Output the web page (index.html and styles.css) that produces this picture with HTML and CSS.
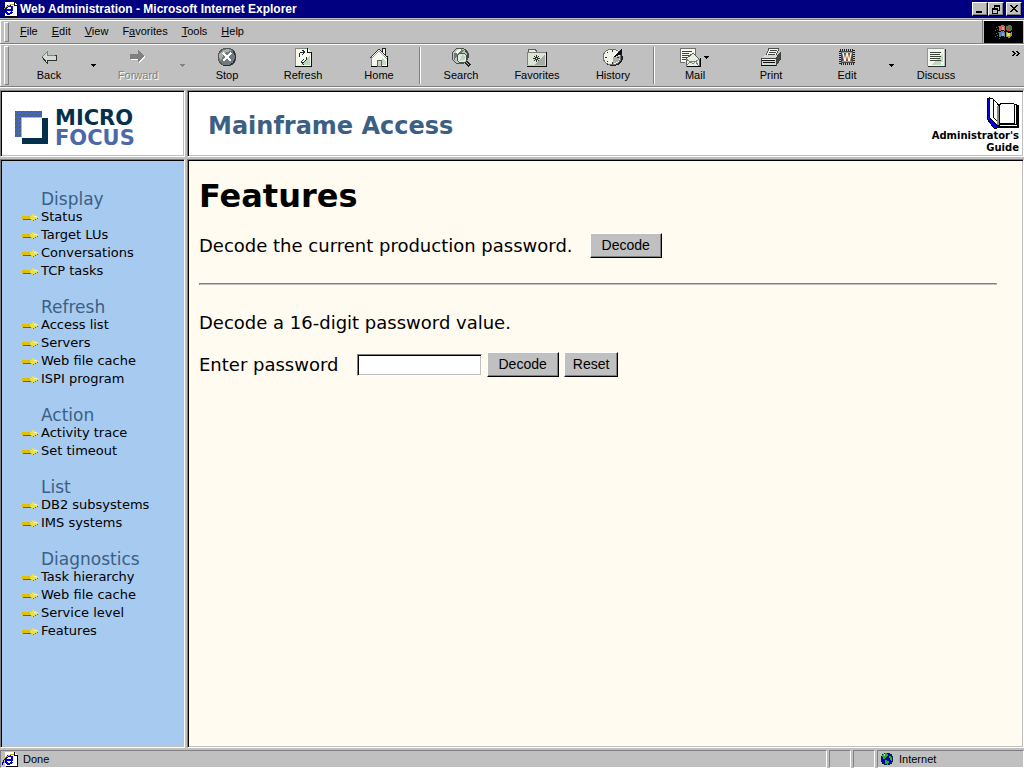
FILE: index.html
```
<!DOCTYPE html>
<html lang="en">
<head>
  <meta charset="UTF-8">
  <title>Web Administration - Microsoft Internet Explorer</title>
  <link rel="stylesheet" href="styles.css">
</head>
<body>

  <!-- Shared icons -->
  <svg class="defs" width="0" height="0" aria-hidden="true">
    <symbol id="ie" viewBox="0 0 16 16">
      <path d="M3 1h9l3 3v11H3z" fill="#fff"/>
      <path d="M12 1v3h3M15 4v11H4" fill="none" stroke="#000"/>
      <path d="M10 11Q6 15 4 11Q2 6 7 5Q11 5 10 9H4" fill="none" stroke="#0000d0" stroke-width="2"/>
      <path d="M1 13Q0 9 6 5Q11 2 12 4" fill="none" stroke="#c8b400"/>
      <path d="M1 14Q0 10 5 6" fill="none" stroke="#0000a0"/>
    </symbol>
    <symbol id="arrow" viewBox="0 0 18 8">
      <path d="M1 6h8v1H1zM11 7h1v1h-1zM12 6h2v1h-2zM14 5h2v1h-2zM16 4h1v1h-1z" fill="#606050"/>
      <path d="M0 3h8v3H0z" fill="#e0c000"/>
      <path d="M8 3h2V1h2v1h2v1h2v1h1v1h-2v1h-2v1h-2v1h-1V6H8z" fill="#e8e050"/>
      <path d="M12 3h3v1h-3z" fill="#f8f8a8"/>
    </symbol>
    <symbol id="drop" viewBox="0 0 5 3">
      <path d="M0 0h5v1H4v1H3v1H2V2H1V1H0z" fill="currentColor"/>
    </symbol>
  </svg>

  <header class="titlebar">
    <svg class="icon16" aria-hidden="true"><use href="#ie"/></svg>
    <span class="caption">Web Administration - Microsoft Internet Explorer</span>
    <button type="button" aria-label="Minimize"><svg width="10" height="8"><path d="M1 6h6v2H1z"/></svg></button>
    <button type="button" aria-label="Restore"><svg width="10" height="9"><path d="M3 0h6v6H7V5h1V2H4v1H3zM1 3h6v6H1zM2 5v3h4V5z" fill-rule="evenodd"/></svg></button>
    <button type="button" class="close" aria-label="Close"><svg width="9" height="8"><path d="M0 0h2v1h1v1h2V1h1V0h2v1H7v1H6v1H5v1h1v1h1v1h1v1H6V6H5V5H3v1H2v1H0V6h1V5h1V4h1V3H2V2H1V1H0z"/></svg></button>
  </header>

  <div class="rebar">
    <div class="menu-row">
      <nav class="menu">
        <a href="#"><u>F</u>ile</a>
        <a href="#"><u>E</u>dit</a>
        <a href="#"><u>V</u>iew</a>
        <a href="#">F<u>a</u>vorites</a>
        <a href="#"><u>T</u>ools</a>
        <a href="#"><u>H</u>elp</a>
      </nav>
      <div class="throbber">
        <svg width="20" height="18" aria-hidden="true">
          <path d="M2 4h1v1H2zM4 3h1v1H4zM1 7h1v1H1zM3 6h1v1H3zM2 10h1v1H2zM4 9h1v1H4zM1 13h1v1H1zM3 12h1v1H3zM5 15h1v1H5z" fill="#806040"/>
          <path d="M5 3l3-1 3 1v5L8 7 5 8z" fill="#c06060"/>
          <path d="M12 3l3-1 3 1v4l-3 1-3-1z" fill="#408050"/>
          <path d="M5 9l3-1 3 1v5l-3-1-3 1z" fill="#5080b0"/>
          <path d="M12 9l3 1 3-1v4l-3 2-3-1z" fill="#a09040"/>
          <path d="M8 4h2v3H8z" fill="#f09080"/><path d="M8 10h2v3H8z" fill="#70b0e0"/>
          <path d="M13 5h3v3h-3z" fill="#e03030"/><path d="M13 10h3v3h-3z" fill="#f0e020"/>
        </svg>
      </div>
    </div>

    <div class="toolbar">
      <button type="button">
        <svg width="20" height="20" aria-hidden="true">
          <path d="M3 10l5-5v3h9v5H8v3z" fill="#d0dcd0" stroke="#303030"/>
          <path d="M3 10l5-5v3h8" fill="none" stroke="#808080"/>
        </svg>
        Back
      </button>
      <button type="button" class="split" aria-label="Back history"><svg width="5" height="3"><use href="#drop"/></svg></button>
      <button type="button" class="off">
        <svg width="20" height="20" aria-hidden="true">
          <path d="M3 8h8V4l6 6-6 6v-3H3z" fill="#fff"/>
          <path d="M2 7h8V3l6 6-6 6v-3H2z" fill="#808080"/>
        </svg>
        Forward
      </button>
      <button type="button" class="split off" aria-label="Forward history"><svg width="5" height="3"><use href="#drop"/></svg></button>
      <button type="button">
        <svg width="20" height="20" aria-hidden="true">
          <circle cx="10" cy="10" r="9" fill="#707880" stroke="#505858"/>
          <path d="M3 13Q0 6 7 3Q12 1 15 4Q6 4 4 14z" fill="#a8b0a8"/>
          <path d="M16 4Q21 10 16 16Q12 20 6 18" fill="none" stroke="#203030"/>
          <path d="M6 6l8 8M14 6l-8 8" stroke="#fff" stroke-width="2"/>
        </svg>
        Stop
      </button>
      <button type="button">
        <svg width="20" height="20" aria-hidden="true">
          <path d="M2 1h12l4 4v14H2z" fill="#f8faf0"/>
          <path d="M17 8v10H7z" fill="#b8d8b8"/>
          <path d="M14 1v4h4M18 5v14H2" fill="none" stroke="#101010"/>
          <path d="M2 19V1h12" fill="none" stroke="#888"/>
          <path d="M6 10V7l2-2h3M9 3l3 2-3 3M13 10v3l-2 2H8M11 12l-3 3 3 3" fill="none" stroke="#203030"/>
        </svg>
        Refresh
      </button>
      <button type="button">
        <svg width="20" height="20" aria-hidden="true">
          <path d="M13 1h3v7h-3z" fill="#eef4e8" stroke="#202020"/>
          <path d="M2 10l8-9 8 9v9H2z" fill="#f8faf0"/>
          <path d="M2 19h16V9" fill="none" stroke="#000"/>
          <path d="M2 10v9" stroke="#808080"/>
          <path d="M1 11L10 2l9 9" fill="none" stroke="#303030"/>
          <path d="M2 12l8-8 8 8" fill="none" stroke="#a0a0a0"/>
          <path d="M13 11l4 3v4h-4z" fill="#c0dcc0"/>
          <path d="M8 13h4v6H8z" fill="#c8d0c8" stroke="#606060"/>
        </svg>
        Home
      </button>
      <span class="sep"></span>
      <button type="button">
        <svg width="20" height="20" aria-hidden="true">
          <circle cx="9" cy="9" r="8" fill="#b8c8b8" stroke="#505050"/>
          <path d="M3 6Q7 6 8 2L13 3 11 6 5 10 3 14z" fill="#707878"/>
          <path d="M4 5l4-3 3 1-5 4zM5 12l3-2 1 5z" fill="#f4f8e8"/>
          <path d="M14 3q4 3 3 8" fill="none" stroke="#404848" stroke-width="2"/>
          <circle cx="11" cy="11" r="5" fill="#e0e8dc" stroke="#505050"/>
          <path d="M11 7a4 4 0 0 1 3 5l-5 2z" fill="#bcd4bc"/>
          <path d="M15 15l4 4" stroke="#202020" stroke-width="3"/><path d="M14 14l4 4" stroke="#b0b0b0"/>
        </svg>
        Search
      </button>
      <button type="button">
        <svg width="22" height="20" aria-hidden="true">
          <path d="M2 5l1-3h6l2 3" fill="#e8ece0" stroke="#606060"/>
          <path d="M1 5h19v13H1z" fill="#dce4d4"/><path d="M19 7v11H8z" fill="#a4aca4"/>
          <path d="M1 18V5h19" fill="none" stroke="#808080"/><path d="M20 5v14H1" fill="none" stroke="#101010"/>
          <path d="M10 8v7M7 11h7M8 9l5 5M13 9l-5 5" stroke="#303030"/>
          <path d="M10 11h1v1h-1z" fill="#fff"/>
        </svg>
        Favorites
      </button>
      <button type="button">
        <svg width="22" height="20" aria-hidden="true">
          <ellipse cx="11" cy="11" rx="10" ry="8" fill="#202020"/>
          <ellipse cx="10" cy="10" rx="9" ry="8" fill="#f0f4e8" stroke="#707070"/>
          <path d="M11 10l7-1q0 6-7 8z" fill="#a8b0a8"/>
          <path d="M10 3v2M10 15v2M3 10h2M15 10h2M5 5l1 1M5 15l1-1" stroke="#303030"/>
          <path d="M10 11L20 1v6z" fill="#101010"/><path d="M10 11l7-8" stroke="#fff"/>
        </svg>
        History
      </button>
      <span class="sep"></span>
      <button type="button">
        <svg width="34" height="20" aria-hidden="true">
          <path d="M2 1h15v14H2z" fill="#f8faf0"/><path d="M2 15V1h15v8M2 15h5" fill="none" stroke="#707070"/>
          <path d="M4 4h10M4 6h7M4 8h9M4 10h6M4 12h4" stroke="#404040"/>
          <path d="M8 12l7-6 6 6v7H8z" fill="#e8f0e0" stroke="#606060"/>
          <path d="M8 19l5-5h4l4 5M8 12l6 4h2l5-4" fill="none" stroke="#808080"/>
          <path d="M22 11v8H9" fill="none" stroke="#000"/>
          <path d="M26 9h5v1h-1v1h-1v1h-1v-1h-1v-1h-1z"/>
        </svg>
        Mail
      </button>
      <button type="button">
        <svg width="22" height="20" aria-hidden="true">
          <path d="M6 9L9 1h10l-3 8z" fill="#f8faf0" stroke="#505050"/>
          <path d="M10 3h7M9 5h7M8 7h7" stroke="#404040"/>
          <path d="M1 11l4-3h11l4-3v8l-4 6H1z" fill="#d0dcd0"/>
          <path d="M1 11h15v7H1zM16 11l4-5v7l-4 5" fill="none" stroke="#404040"/>
          <path d="M16 12l4-6v7l-4 5z" fill="#404840"/>
          <path d="M2 13h13M1 18h15M3 15h12" stroke="#101010"/><path d="M2 12h13" stroke="#fff"/>
        </svg>
        Print
      </button>
      <button type="button">
        <svg width="18" height="20" aria-hidden="true">
          <path d="M1 2h16v16H1z" fill="#c0c0c0"/>
          <path d="M2 3h14v14H2z" fill="none" stroke="#202020" stroke-width="2" stroke-dasharray="1 1"/>
          <path d="M3 4h12v12H3z" fill="#484848"/>
          <path d="M4 5h10v1H4zM4 14h10v1H4z" fill="#a0a0a0"/>
          <text x="9" y="14" class="w">W</text>
        </svg>
        Edit
      </button>
      <button type="button" class="split" aria-label="Edit with"><svg width="5" height="3"><use href="#drop"/></svg></button>
      <button type="button">
        <svg width="20" height="20" aria-hidden="true">
          <path d="M1 1h17v18H1z" fill="#f4f8ec"/><path d="M17 6v12H5z" fill="#c0dcc0"/>
          <path d="M1 19V1h17" fill="none" stroke="#909890"/><path d="M19 2v17H2" fill="none" stroke="#303030"/>
          <path d="M4 5h11M4 7h10M4 9h11M4 11h10M4 13h11" stroke="#404840"/>
          <path d="M15 15h3l-3 3z" fill="#fff"/>
        </svg>
        Discuss
      </button>
      <button type="button" class="more" aria-label="More buttons"><svg width="8" height="5"><path d="M0 0h2l2 2.500L2 5H0l2-2.500zM4 0h2l2 2.500L6 5H4l2-2.500z"/></svg></button>
    </div>
  </div>

  <div class="frames">
    <div class="frame logo">
      <svg width="34" height="34" aria-hidden="true">
        <defs>
          <pattern id="dither" width="4" height="4" patternUnits="userSpaceOnUse">
            <path d="M0 0h4v4H0z" fill="#4666b8"/><path d="M0 0h1v1H0zM2 1h1v1H2zM1 3h1v1H1z" fill="#406050"/><path d="M3 2h1v1H3zM1 1h1v1H1z" fill="#5068c8"/>
          </pattern>
        </defs>
        <path d="M27 7h6v26H7v-6h20z" fill="#04304c"/>
        <path d="M0 0h27v6H6v20H0z" fill="url(#dither)"/>
        <path d="M6 26V6h21" fill="none" stroke="#a0b8e8"/>
      </svg>
      <div class="brand"><span>MICRO</span><span class="focus">FOCUS</span></div>
    </div>

    <div class="frame banner">
      <h2>Mainframe Access</h2>
      <a class="guide" href="#">
        <svg width="33" height="32" aria-hidden="true">
          <path d="M1 2L3 1V21L11 29H31V8H32V30H13L11 31H8L1 22z" fill="#00f" stroke="#000"/>
          <path d="M3 1h3l5 5q2 2 2 5v17h-2l-8-8z" fill="#fff" stroke="#000"/>
          <path d="M7 2v18l5 5" fill="none" stroke="#000"/>
          <path d="M13 8l3-2h11l1 1h2v20H13z" fill="#fff" stroke="#000"/>
          <path d="M28 7v19H14" fill="none" stroke="#000"/>
          <path d="M12 9v19" stroke="#888" stroke-width="2"/>
        </svg>
        <span>Administrator's<br>Guide</span>
      </a>
    </div>

    <nav class="frame side">
      <h3>Display</h3>
      <ul>
        <li><a href="#"><svg><use href="#arrow"/></svg>Status</a></li>
        <li><a href="#"><svg><use href="#arrow"/></svg>Target LUs</a></li>
        <li><a href="#"><svg><use href="#arrow"/></svg>Conversations</a></li>
        <li><a href="#"><svg><use href="#arrow"/></svg>TCP tasks</a></li>
      </ul>
      <h3>Refresh</h3>
      <ul>
        <li><a href="#"><svg><use href="#arrow"/></svg>Access list</a></li>
        <li><a href="#"><svg><use href="#arrow"/></svg>Servers</a></li>
        <li><a href="#"><svg><use href="#arrow"/></svg>Web file cache</a></li>
        <li><a href="#"><svg><use href="#arrow"/></svg>ISPI program</a></li>
      </ul>
      <h3>Action</h3>
      <ul>
        <li><a href="#"><svg><use href="#arrow"/></svg>Activity trace</a></li>
        <li><a href="#"><svg><use href="#arrow"/></svg>Set timeout</a></li>
      </ul>
      <h3>List</h3>
      <ul>
        <li><a href="#"><svg><use href="#arrow"/></svg>DB2 subsystems</a></li>
        <li><a href="#"><svg><use href="#arrow"/></svg>IMS systems</a></li>
      </ul>
      <h3>Diagnostics</h3>
      <ul>
        <li><a href="#"><svg><use href="#arrow"/></svg>Task hierarchy</a></li>
        <li><a href="#"><svg><use href="#arrow"/></svg>Web file cache</a></li>
        <li><a href="#"><svg><use href="#arrow"/></svg>Service level</a></li>
        <li><a href="#"><svg><use href="#arrow"/></svg>Features</a></li>
      </ul>
    </nav>

    <main class="frame content">
      <h1>Features</h1>
      <form class="current">
        <span>Decode the current production password.</span>
        <button type="button">Decode</button>
      </form>
      <hr>
      <p>Decode a 16-digit password value.</p>
      <form class="entry">
        <label for="password">Enter password</label>
        <input type="text" id="password" maxlength="16">
        <button type="button">Decode</button>
        <button type="reset">Reset</button>
      </form>
    </main>
  </div>

  <footer class="status">
    <div class="pane message"><svg class="icon16" aria-hidden="true"><use href="#ie"/></svg>Done</div>
    <div class="pane"></div>
    <div class="pane"></div>
    <div class="pane zone">
      <svg width="14" height="14" aria-hidden="true">
        <circle cx="7" cy="7" r="6" fill="#0000c0" stroke="#002040"/>
        <path d="M2 3l4-2 2 2-2 3-3 1zM9 4l3 1v4l-2-1zM5 8l4 1-1 4-3-1z" fill="#20b020"/>
        <path d="M3 3l2-1v2z" fill="#a0f0a0"/>
      </svg>
      Internet
    </div>
  </footer>

</body>
</html>
```
FILE: styles.css
```
* {
  box-sizing: border-box;
}

body {
  margin: 0;
  height: 100vh;
  display: flex;
  flex-direction: column;
  overflow: hidden;
  background-color: #c0c0c0;
  color: #000;
  font-family: "Liberation Sans", Arial, sans-serif;
  font-size: 11px;
}

a {
  color: inherit;
  text-decoration: none;
}

button {
  font-family: inherit;
  color: #000;
}

svg {
  flex: none;
  shape-rendering: crispEdges;
}

.defs {
  display: none;
}

.icon16 {
  width: 16px;
  height: 16px;
}

/* Title bar */
.titlebar {
  display: flex;
  align-items: center;
  height: 18px;
  padding: 0 2px;
  background-color: #000080;
  color: #fff;
  font-size: 12px;
  font-weight: bold;
}

.caption {
  flex: 1;
  padding-left: 2px;
}

.titlebar button {
  display: flex;
  align-items: center;
  justify-content: center;
  width: 16px;
  height: 14px;
  padding: 0;
  background-color: #c0c0c0;
  border: 1px solid;
  border-color: #fff #000 #000 #fff;
  box-shadow: inset -1px -1px #808080;
}

.titlebar .close {
  margin-left: 2px;
}

/* Menu and toolbar */
.rebar {
  height: 72px;
  padding-top: 1px;
}

.menu-row {
  display: flex;
  height: 25px;
  border-top: 1px solid #808080;
  border-bottom: 1px solid #808080;
  box-shadow: inset 1px 1px #fff;
}

.menu {
  flex: 1;
  display: flex;
  align-items: center;
  border-right: 1px solid #808080;
}

.menu a {
  padding: 0 7px 2px;
}

.menu::before,
.toolbar::before {
  content: "";
  width: 3px;
  height: 18px;
  margin: 0 4px;
  border: 1px solid;
  border-color: #fff #808080 #808080 #fff;
}

.toolbar::before {
  height: 37px;
  margin-right: 2px;
}

.throbber {
  display: flex;
  align-items: center;
  justify-content: center;
  width: 39px;
  margin: 1px 1px 0;
  background-color: #000;
}

.toolbar {
  display: flex;
  align-items: center;
  height: 43px;
  border-bottom: 1px solid #808080;
  box-shadow: inset 1px 1px #fff, 0 1px #fff;
}

.toolbar button {
  display: flex;
  flex-direction: column;
  align-items: center;
  justify-content: center;
  width: 76px;
  height: 38px;
  padding: 0;
  border: none;
  background: none;
  font-size: 11px;
  line-height: 16px;
}

.toolbar .split {
  width: 13px;
}

.toolbar .off {
  color: #808080;
  text-shadow: 1px 1px #fff;
}

.toolbar .more {
  width: 12px;
  height: 28px;
  margin: 0 2px 0 auto;
  justify-content: flex-start;
}

.sep {
  width: 2px;
  height: 37px;
  margin: 0 2px;
  border-left: 1px solid #808080;
  border-right: 1px solid #fff;
}

.w {
  fill: #fff;
  font-size: 10px;
  font-weight: bold;
  text-anchor: middle;
}

/* Frames */
.frames {
  flex: 1;
  min-height: 0;
  display: grid;
  grid-template-columns: 185px 1fr;
  grid-template-rows: 67px 1fr;
  gap: 2px;
  font-family: "DejaVu Sans", Verdana, sans-serif;
}

.frame {
  border: 1px solid;
  border-color: #808080 #fff #fff #808080;
  box-shadow: inset 1px 1px #000, inset -1px -1px #c0c0c0;
  background-color: #fff;
}

.logo {
  display: flex;
  align-items: center;
  gap: 6px;
  padding: 8px 0 0 14px;
}

.brand {
  display: flex;
  flex-direction: column;
  color: #04304c;
  font-size: 21px;
  font-weight: bold;
  line-height: 20px;
}

.focus {
  color: #4c68a8;
}

.banner {
  display: flex;
  align-items: center;
  justify-content: space-between;
  padding: 4px 4px 0 20px;
}

.banner h2 {
  margin: 0;
  color: #3c6084;
  font-size: 24px;
}

.guide {
  display: flex;
  flex-direction: column;
  align-items: flex-end;
  gap: 1px;
  font-size: 10px;
  font-weight: bold;
  line-height: 12px;
  text-align: right;
}

.side {
  padding: 30px 0 0 21px;
  background-color: #a6caf0;
}

.side h3 {
  margin: 0 0 0 19px;
  color: #3c6084;
  font-size: 17px;
  font-weight: normal;
  line-height: 18px;
}

.side ul {
  margin: 0 0 18px;
  padding: 0;
  list-style: none;
}

.side a {
  display: flex;
  align-items: center;
  gap: 1px;
  font-size: 13px;
  line-height: 18px;
}

.side svg {
  width: 18px;
  height: 8px;
}

.content {
  padding: 16px 26px 0 11px;
  background-color: #fffbf0;
  font-size: 18px;
}

.content h1 {
  margin: 0 0 17px;
  font-size: 32px;
  line-height: 40px;
}

.content form {
  display: flex;
  align-items: center;
}

.content p {
  margin: 27px 0 18px;
  line-height: 22px;
}

.content hr {
  margin: 25px 0 0;
  border: 1px solid;
  border-color: #808080 #c0c0c0 #c0c0c0 #808080;
}

.current {
  gap: 17px;
}

.entry label {
  margin-right: 18px;
}

.entry button {
  margin-left: 5px;
}

.content button {
  height: 25px;
  padding: 0 11px 2px;
  background-color: #c0c0c0;
  border: 1px solid;
  border-color: #fff #000 #000 #fff;
  box-shadow: inset -1px -1px #808080;
  font-family: "Liberation Sans", Arial, sans-serif;
  font-size: 14px;
}

.content button[type="reset"] {
  padding: 0 8px 2px;
}

.content input {
  width: 125px;
  height: 22px;
  padding: 2px 4px;
  background-color: #fff;
  border: 1px solid;
  border-color: #808080 #fff #fff #808080;
  box-shadow: inset 1px 1px #000, inset -1px -1px #c0c0c0;
  font-size: 13px;
}

/* Status bar */
.status {
  display: flex;
  gap: 2px;
  height: 20px;
  padding-top: 2px;
}

.pane {
  width: 22px;
  border: 1px solid;
  border-color: #808080 #fff #fff #808080;
}

.message,
.zone {
  display: flex;
  align-items: center;
  gap: 5px;
}

.message {
  flex: 1;
  padding-left: 1px;
}

.zone {
  width: 147px;
  padding-left: 2px;
}
```
